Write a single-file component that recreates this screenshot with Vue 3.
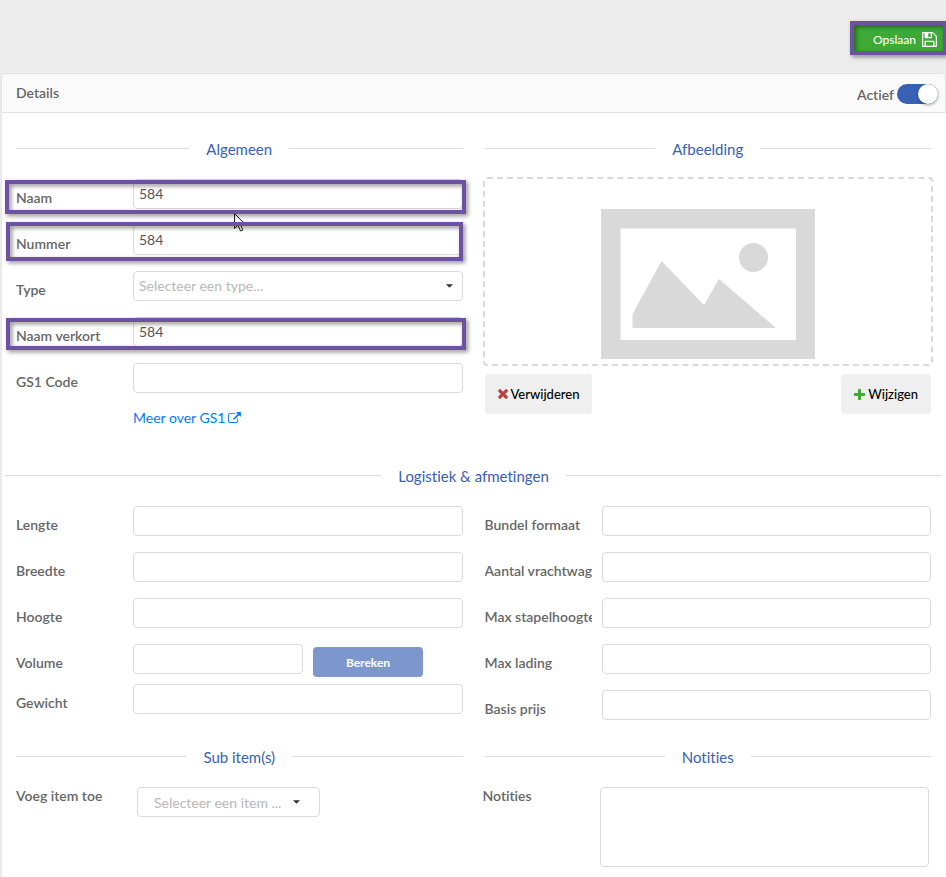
<script setup>
import { ref } from 'vue'

const active = ref(true)
const type = ref('')
const subItem = ref('')
const notes = ref('')

const general = ref([
  { id: 'naam', label: 'Naam', value: '584', mark: 'mark-name' },
  { id: 'nummer', label: 'Nummer', value: '584', mark: 'mark-number' },
  { id: 'type', label: 'Type', select: true },
  { id: 'naam-verkort', label: 'Naam verkort', value: '584', mark: 'mark-short' },
  { id: 'gs1', label: 'GS1 Code', value: '' },
])
const sizes = ref([
  { id: 'lengte', label: 'Lengte', value: '' },
  { id: 'breedte', label: 'Breedte', value: '' },
  { id: 'hoogte', label: 'Hoogte', value: '' },
  { id: 'volume', label: 'Volume', value: '', calc: true },
  { id: 'gewicht', label: 'Gewicht', value: '' },
])
const logistics = ref([
  { id: 'bundel', label: 'Bundel formaat', value: '' },
  { id: 'aantal', label: 'Aantal vrachtwagen', value: '' },
  { id: 'stapel', label: 'Max stapelhoogte', value: '' },
  { id: 'lading', label: 'Max lading', value: '' },
  { id: 'prijs', label: 'Basis prijs', value: '' },
])
</script>

<template>
  <div class="page">
    <header class="toolbar">
      <div class="save-wrap">
        <button type="button" class="save">
          Opslaan
          <svg class="icon-save" viewBox="0 128 1536 1536" aria-hidden="true">
            <path d="M384 1536h768v-384h-768v384zM1280 1536h128v-896q0-14-10-38.5t-20-34.5l-281-281q-10-10-34-20t-39-10v416q0 40-28 68t-68 28h-576q-40 0-68-28t-28-68v-416h-128v1280h128v-416q0-40 28-68t68-28h832q40 0 68 28t28 68v416zM896 608v-320q0-13-9.5-22.5t-22.5-9.5h-192q-13 0-22.5 9.5t-9.5 22.5v320q0 13 9.5 22.5t22.5 9.5h192q13 0 22.5-9.5t9.5-22.5zM1536 640v928q0 40-28 68t-68 28h-1344q-40 0-68-28t-28-68v-1344q0-40 28-68t68-28h928q40 0 88 20t76 48l280 280q28 28 48 76t20 88z" />
          </svg>
        </button>
        <span class="mark mark-save"></span>
      </div>
    </header>

    <main class="card">
      <div class="card-head">
        <h1>Details</h1>
        <label class="toggle">Actief <input v-model="active" type="checkbox" /></label>
      </div>

      <form class="card-body" @submit.prevent>
        <div class="columns general">
          <section>
            <h2>Algemeen</h2>
            <div v-for="f in general" :key="f.id" class="row">
              <label :for="f.id">{{ f.label }}</label>
              <div v-if="f.select" class="select">
                <select :id="f.id" v-model="type">
                  <option value="">Selecteer een type...</option>
                </select>
                <svg class="caret" viewBox="0 0 8 4" aria-hidden="true"><path d="M0 0h8L4 4z" /></svg>
              </div>
              <input v-else :id="f.id" v-model="f.value" type="text" class="field" />
              <span v-if="f.mark" class="mark" :class="f.mark"></span>
              <svg v-if="f.id === 'naam'" class="pointer" viewBox="0 0 12 19" aria-hidden="true">
                <path d="M.5 .5v15l3.500-3.300 2.500 5.800 2.400-1-2.500-5.700h4.800z" />
              </svg>
            </div>
            <a class="more" href="#gs1">Meer over GS1
              <svg class="icon-link" viewBox="0 0 1792 1536" aria-hidden="true">
                <path d="M1408 928v320q0 119-84.5 203.5t-203.5 84.5h-832q-119 0-203.5-84.5t-84.5-203.5v-832q0-119 84.5-203.5t203.5-84.5h704q14 0 23 9t9 23v64q0 14-9 23t-23 9h-704q-66 0-113 47t-47 113v832q0 66 47 113t113 47h832q66 0 113-47t47-113v-320q0-14 9-23t23-9h64q14 0 23 9t9 23zM1792 64v512q0 26-19 45t-45 19-45-19l-176-176-652 652q-10 10-23 10t-23-10l-114-114q-10-10-10-23t10-23l652-652-176-176q-19-19-19-45t19-45 45-19h512q26 0 45 19t19 45z" />
              </svg>
            </a>
          </section>

          <section>
            <h2>Afbeelding</h2>
            <div class="drop">
              <svg class="placeholder" viewBox="0 0 214 150" aria-hidden="true">
                <path d="M0 0h214v150H0zM19.500 19.500V131H195V19.500z" fill-rule="evenodd" />
                <path d="M31.500 119v-14L60.500 52 103 96l15-26 57 49z" />
                <circle cx="152.500" cy="48.500" r="14.500" />
              </svg>
            </div>
            <div class="image-actions">
              <button type="button" class="plain">
                <svg class="icon-x" viewBox="302 366 1188 1188" aria-hidden="true">
                  <path d="M1490 1322q0 40-28 68l-136 136q-28 28-68 28t-68-28l-294-294-294 294q-28 28-68 28t-68-28l-136-136q-28-28-28-68t28-68l294-294-294-294q-28-28-28-68t28-68l136-136q28-28 68-28t68 28l294 294 294-294q28-28 68-28t68 28l136 136q28 28 28 68t-28 68l-294 294 294 294q28 28 28 68z" />
                </svg>
                Verwijderen
              </button>
              <button type="button" class="plain">
                <svg class="icon-plus" viewBox="192 128 1408 1408" aria-hidden="true">
                  <path d="M1600 736v192q0 40-28 68t-68 28h-416v416q0 40-28 68t-68 28h-192q-40 0-68-28t-28-68v-416h-416q-40 0-68-28t-28-68v-192q0-40 28-68t68-28h416v-416q0-40 28-68t68-28h192q40 0 68 28t28 68v416h416q40 0 68 28t28 68z" />
                </svg>
                Wijzigen
              </button>
            </div>
          </section>
        </div>

        <h2 class="wide">Logistiek &amp; afmetingen</h2>
        <div class="columns logistics">
          <section>
            <div v-for="f in sizes" :key="f.id" class="row" :class="{ calc: f.calc }">
              <label :for="f.id">{{ f.label }}</label>
              <input :id="f.id" v-model="f.value" type="text" class="field" />
              <button v-if="f.calc" type="button" class="calc-btn">Bereken</button>
            </div>
          </section>
          <section>
            <div v-for="f in logistics" :key="f.id" class="row">
              <label :for="f.id">{{ f.label }}</label>
              <input :id="f.id" v-model="f.value" type="text" class="field" />
            </div>
          </section>
        </div>

        <div class="columns">
          <section>
            <h2>Sub item(s)</h2>
            <div class="sub">
              <label for="sub-item">Voeg item toe</label>
              <div class="select item">
                <select id="sub-item" v-model="subItem">
                  <option value="">Selecteer een item ...</option>
                </select>
                <svg class="caret" viewBox="0 0 8 4" aria-hidden="true"><path d="M0 0h8L4 4z" /></svg>
              </div>
            </div>
          </section>
          <section>
            <h2>Notities</h2>
            <div class="sub notes">
              <label for="notities">Notities</label>
              <textarea id="notities" v-model="notes" class="field"></textarea>
            </div>
          </section>
        </div>
      </form>
    </main>
  </div>
</template>

<style>
body {
  background: #ececec;
}
</style>

<style scoped>
* {
  box-sizing: border-box;
}
.page {
  display: flex;
  flex-direction: column;
  min-height: 100vh;
  overflow: hidden;
  font-family: Lato, "Liberation Sans", sans-serif;
  font-size: 14px;
  font-variant-ligatures: none;
  color: #666;
}
button,
input,
select,
textarea {
  margin: 0;
  font: inherit;
  font-variant-ligatures: none;
}
button {
  border: 0;
  border-radius: 4px;
  cursor: pointer;
}
.toolbar {
  display: flex;
  justify-content: flex-end;
  align-items: flex-end;
  height: 73px;
  padding-bottom: 20px;
}
.save-wrap {
  position: relative;
}
.save {
  display: flex;
  align-items: center;
  gap: 6px;
  height: 28px;
  padding: 0 9px 0 19px;
  border-radius: 0;
  background: #3ea935;
  color: #fff;
  font-size: 12px;
  font-weight: 500;
}
.icon-save {
  width: 15px;
  height: 15px;
  fill: #fff;
}
.mark {
  position: absolute;
  z-index: 2;
  border: 4px solid #6c52a0;
  filter: drop-shadow(2px 2px 2px rgba(0, 0, 0, 0.45));
  pointer-events: none;
}
.mark-save {
  inset: -4px -1px -2px -4px;
}
.mark-name {
  inset: 1px -3px -5px -11px;
}
.mark-number {
  inset: -3px 0 -6px -10px;
}
.mark-short {
  inset: 1px -3px -3px -10px;
}
.pointer {
  position: absolute;
  z-index: 1;
  top: 34px;
  left: 218px;
  width: 12px;
  height: 19px;
  fill: #fff;
  stroke: #222;
}
.card {
  display: flex;
  flex: 1;
  flex-direction: column;
  margin-left: 1px;
}
.card-head {
  display: flex;
  align-items: center;
  justify-content: space-between;
  height: 40px;
  padding: 2px 7px 0 14px;
  border: 1px solid #e2e2e2;
  border-radius: 4px 4px 0 0;
  background: #fafafa;
}
h1 {
  margin: 0;
  padding-bottom: 4px;
  font-size: 14px;
  font-weight: 600;
}
.toggle {
  display: flex;
  align-items: center;
  gap: 3px;
  font-weight: 600;
}
.toggle input {
  display: flex;
  justify-content: flex-start;
  width: 41px;
  height: 20px;
  border-radius: 10px;
  background: #ccc;
  appearance: none;
}
.toggle input::before {
  content: "";
  width: 20px;
  height: 20px;
  border-radius: 50%;
  background: #fff;
  box-shadow: 0 1px 3px rgba(0, 0, 0, 0.4);
}
.toggle input:checked {
  justify-content: flex-end;
  background: #3860b5;
}
.card-body {
  flex: 1;
  padding: 24px 15px 10px 14px;
  border-left: 1px solid #e8e8e8;
  background: #fff;
}
.columns {
  display: grid;
  grid-template-columns: 1fr 1fr;
  column-gap: 22px;
}
.columns > section {
  min-width: 0;
}
.general {
  margin-bottom: 37px;
}
.logistics {
  margin-bottom: 9px;
}
h2 {
  display: flex;
  align-items: center;
  gap: 17px;
  height: 24px;
  margin: 0 0 18px;
  color: #3860b5;
  font-size: 15px;
  font-weight: 400;
}
h2::before,
h2::after {
  content: "";
  flex: 1;
  height: 1px;
  margin-bottom: 2px;
  background: #dcdcdc;
}
.wide {
  margin-left: -11px;
  margin-right: -11px;
}
.row {
  position: relative;
  display: grid;
  grid-template-columns: 107px 1fr;
  column-gap: 10px;
  height: 30px;
  margin-bottom: 16px;
}
.row label {
  overflow: hidden;
  height: 38px;
  line-height: 38px;
  font-weight: 600;
  white-space: nowrap;
}
.row.calc {
  grid-template-columns: 107px 170px 110px;
  margin-bottom: 10px;
}
.field,
.select select {
  width: 100%;
  height: 30px;
  padding: 0 5px 2px;
  border: 1px solid #dadada;
  border-radius: 4px;
  background: #fff;
  color: #555;
  outline: 0;
}
.select {
  display: grid;
  align-items: center;
  height: 30px;
}
.select select,
.caret {
  grid-area: 1 / 1;
}
.select select {
  appearance: none;
  color: #b8b8b8;
}
.caret {
  justify-self: end;
  width: 7px;
  height: 4px;
  margin-right: 10px;
  fill: #333;
  pointer-events: none;
}
.more {
  display: flex;
  align-items: center;
  gap: 3px;
  width: max-content;
  height: 18px;
  margin-left: 117px;
  padding-bottom: 1px;
  color: #007bff;
  text-decoration: none;
}
.icon-link {
  width: 13px;
  height: 11px;
  fill: #007bff;
}
.drop {
  display: flex;
  justify-content: center;
  margin: -2px;
  padding: 30px 0 5px;
  border: 2px dashed #d9d9d9;
  border-radius: 4px;
}
.placeholder {
  width: 214px;
  height: 150px;
  fill: #d9d9d9;
}
.image-actions {
  display: flex;
  justify-content: space-between;
  margin-top: 10px;
}
.plain {
  display: flex;
  align-items: center;
  gap: 3px;
  height: 40px;
  padding: 0 13px;
  background: #efefef;
  color: #000;
  font-size: 13px;
  font-weight: 500;
}
.icon-x {
  width: 10px;
  height: 10px;
  fill: #b94141;
}
.icon-plus {
  width: 11px;
  height: 11px;
  fill: #3ea935;
}
.calc-btn {
  height: 30px;
  margin-top: 3px;
  background: #7d97ce;
  color: #fff;
  font-size: 12px;
  font-weight: 700;
}
.sub {
  display: grid;
  grid-template-columns: 111px 1fr;
  column-gap: 10px;
}
.sub label {
  line-height: 18px;
  font-weight: 600;
}
.item {
  width: 183px;
}
.select.item select {
  padding: 0 16px;
}
.item .caret {
  margin-right: 20px;
}
.notes {
  grid-template-columns: 107px 1fr;
  margin: 0 2px 0 -2px;
}
.notes textarea {
  display: block;
  height: 80px;
  padding: 5px;
  resize: none;
}
</style>
